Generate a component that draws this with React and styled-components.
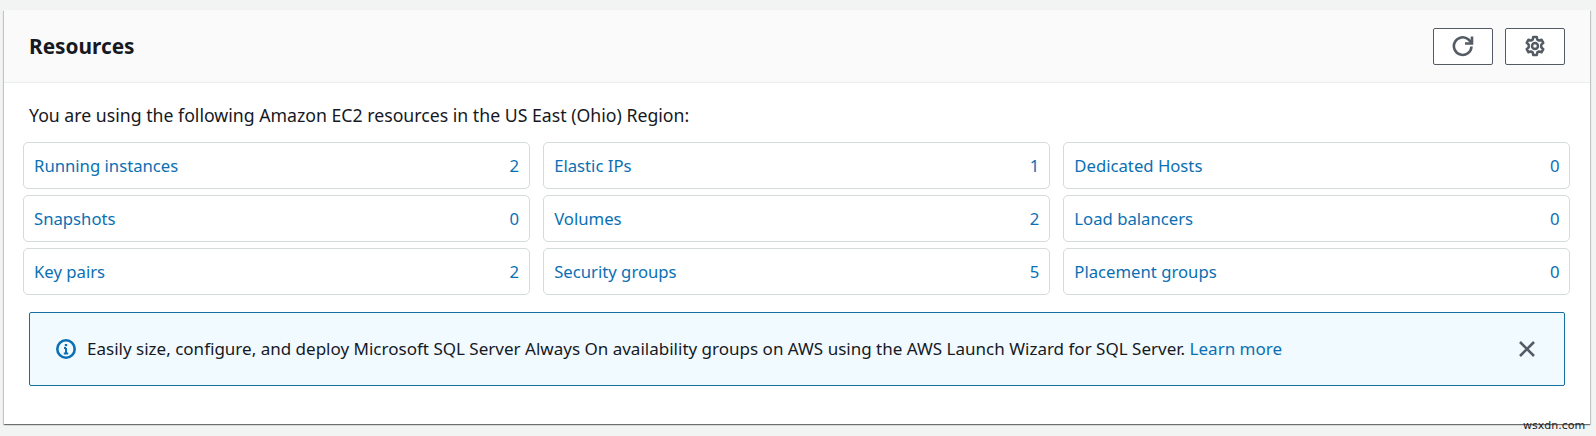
import React from "react";
import styled, { createGlobalStyle } from "styled-components";

const GlobalStyle = createGlobalStyle`
  html, body {
    margin: 0;
    background: #f2f3f3;
  }
  body {
    font-family: "Noto Sans", "Open Sans", sans-serif;
    font-size: 16px;
    color: #16191f;
  }
`;

const Page = styled.div`
  position: relative;
  height: 436px;
  padding: 10px 6px 0 4px;
  box-sizing: border-box;
  overflow: hidden;
`;

const Card = styled.section`
  background: #fff;
  height: 414px;
  box-shadow: 0 1px 1px 0 rgba(0, 0, 0, 0.38), 1px 1px 1px 0 rgba(0, 0, 0, 0.14), -1px 1px 1px 0 rgba(0, 0, 0, 0.14);
`;

const Header = styled.header`
  display: flex;
  align-items: center;
  justify-content: space-between;
  height: 72px;
  padding: 0 25px;
  background: #fafafa;
  border-bottom: 1px solid #eaeded;
`;

const Title = styled.h2`
  margin: 0;
  font-size: 20.8px;
  font-weight: 700;
  line-height: 28px;
`;

const Actions = styled.div`
  display: flex;
  gap: 12px;
`;

const IconButton = styled.button`
  display: flex;
  align-items: center;
  justify-content: center;
  width: 60px;
  height: 37px;
  padding: 0;
  background: #fff;
  border: 1px solid #545b64;
  border-radius: 2px;
  color: #545b64;
`;

const Body = styled.div`
  padding: 21px 19.5px 0 19px;
`;

const Intro = styled.p`
  margin: 0 0 16px 6px;
  font-size: 17.7px;
  line-height: 22px;
`;

const Grid = styled.div`
  display: grid;
  grid-template-columns: repeat(3, 1fr);
  column-gap: 13px;
  row-gap: 6px;
`;

const Tile = styled.a`
  display: flex;
  align-items: center;
  justify-content: space-between;
  height: 47px;
  padding: 0 10px;
  box-sizing: border-box;
  background: #fff;
  border: 1px solid #d5dbdb;
  border-radius: 5px;
  color: #0a70b3;
  font-size: 16.7px;
  line-height: 22px;
`;

const Alert = styled.div`
  display: flex;
  align-items: center;
  height: 74px;
  margin: 17px 6px 0;
  padding: 0 28px 0 26px;
  box-sizing: border-box;
  background: #f1faff;
  border: 1px solid #14709f;
  border-radius: 2px;
`;

const AlertIcon = styled.svg`
  flex: none;
  width: 20px;
  height: 20px;
  margin-right: 11px;
  color: #0a70b3;
`;

const AlertText = styled.div`
  flex: 1;
  font-size: 17.03px;
  line-height: 22px;
`;

const AlertLink = styled.a`
  color: #0a70b3;
`;

const CloseIcon = styled.svg`
  flex: none;
  width: 18px;
  height: 18px;
  color: #545b64;
`;

const Watermark = styled.span`
  position: absolute;
  left: 1523px;
  top: 419px;
  font-family: "DejaVu Sans", sans-serif;
  font-size: 11px;
  line-height: 14px;
  color: #222;
`;

const resources = [
  ["Running instances", 2],
  ["Elastic IPs", 1],
  ["Dedicated Hosts", 0],
  ["Snapshots", 0],
  ["Volumes", 2],
  ["Load balancers", 0],
  ["Key pairs", 2],
  ["Security groups", 5],
  ["Placement groups", 0],
];

const RefreshIcon = () => (
  <svg width="22" height="22" viewBox="0 0 22 22" fill="none" stroke="currentColor" strokeWidth="2.6">
    <path d="M19.5 11.5a8.8 8.8 0 1 1-3-7l3 3" />
    <path d="M20 1.5v7h-7" />
  </svg>
);

const GearIcon = () => (
  <svg width="22" height="22" viewBox="0 0 22 22" fill="none" stroke="currentColor" strokeWidth="2.5" strokeLinejoin="round">
    <circle cx="11" cy="11" r="3" />
    <path d="M9.2 2h3.6l.5 2.6 1.7 1 2.5-.9 1.8 3.1-2 1.8v2.8l2 1.8-1.8 3.1-2.5-.9-1.7 1-.5 2.6H9.2l-.5-2.6-1.7-1-2.5.9-1.8-3.1 2-1.8V9.6l-2-1.8 1.8-3.1 2.5.9 1.7-1z" />
  </svg>
);

export default function App() {
  return (
    <Page>
      <GlobalStyle />
      <Card>
        <Header>
          <Title>Resources</Title>
          <Actions>
            <IconButton aria-label="Refresh"><RefreshIcon /></IconButton>
            <IconButton aria-label="Settings"><GearIcon /></IconButton>
          </Actions>
        </Header>
        <Body>
          <Intro>You are using the following Amazon EC2 resources in the US East (Ohio) Region:</Intro>
          <Grid>
            {resources.map(([label, count]) => (
              <Tile key={label}>
                <span>{label}</span>
                <span>{count}</span>
              </Tile>
            ))}
          </Grid>
          <Alert>
            <AlertIcon viewBox="0 0 20 20" fill="none" stroke="currentColor">
              <circle cx="10" cy="10" r="8.7" strokeWidth="2.6" />
              <path d="M10 9v5.5M7.8 14.5h4.4M8 9h2" strokeWidth="2" />
              <path d="M10 5v2.2" strokeWidth="2.4" />
            </AlertIcon>
            <AlertText>
              Easily size, configure, and deploy Microsoft SQL Server Always On availability groups on AWS using the AWS Launch Wizard for SQL Server.{" "}
              <AlertLink>Learn more</AlertLink>
            </AlertText>
            <CloseIcon viewBox="0 0 18 18" fill="none" stroke="currentColor" strokeWidth="2.6">
              <path d="M2 2l14 14M16 2L2 16" />
            </CloseIcon>
          </Alert>
        </Body>
      </Card>
      <Watermark>wsxdn.com</Watermark>
    </Page>
  );
}
